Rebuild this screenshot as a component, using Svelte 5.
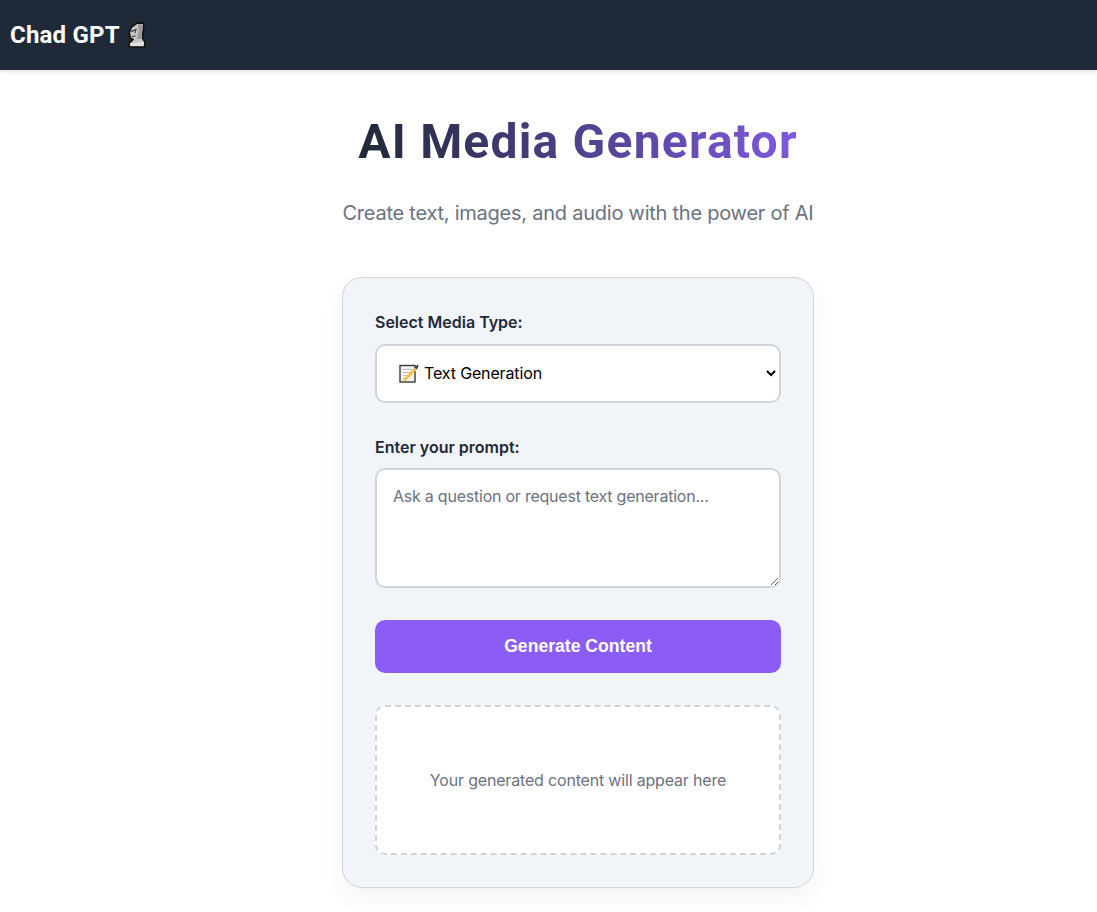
<script>
  // media types offered in the dropdown
  const MEDIA_TYPES = [
    { value: "text", label: "Text Generation" },
    { value: "image", label: "Image Generation" },
    { value: "audio", label: "Audio Generation" },
  ];

  let mediaType = $state("text");
  let prompt = $state("");
</script>

<header class="navbar">
  <span class="brand">Chad GPT</span>
  <svg class="moai" viewBox="0 0 18 26" width="18" height="26" aria-hidden="true">
    <path d="M3.5 5 L9 1 L16 1.2 L14.6 14 L15 17 L17 20 L16.5 25 L1.5 25 L1 21 L5 17.5 L2.2 16 L1.2 10 Z" fill="#c6c6c6" stroke="#111" stroke-width="1.7" stroke-linejoin="round" />
    <path d="M10 2.2 L15 2.2 L13.6 14 L13.6 17 L9 17 L10.5 9 Z" fill="#9a9a9a" />
    <path d="M2.4 21.4 L15.6 19.8 L15.6 24 L2.4 24 Z" fill="#e2e2e2" />
    <path d="M2.6 9.6 L8 7.6 L7 11 M4 14.6 L7.6 14" stroke="#444" stroke-width="1.2" fill="none" />
  </svg>
</header>

<main class="page">
  <h1 class="title">AI Media Generator</h1>
  <p class="subtitle">Create text, images, and audio with the power of AI</p>

  <section class="card">
    <label class="label" for="media-type">Select Media Type:</label>
    <div class="select-wrap">
      <svg class="memo" viewBox="0 0 20 20" width="20" height="20" aria-hidden="true">
        <rect x="1" y="2.5" width="15" height="16.5" fill="#f4f4f0" stroke="#3a3a3a" stroke-width="1.4" />
        <path d="M3.5 6.5h10M3.5 9.5h8M3.5 12.5h5M3.5 15.5h3" stroke="#bdbdbd" stroke-width="1" />
        <path d="M5 15.5 L15.8 4.6 L18 6.6 L7.2 17.4 L4.6 18 Z" fill="#f6c04a" />
        <path d="M15.8 4.6 L18.6 1.4 L19.6 2.6 L18 6.6 Z" fill="#3a3a3a" />
      </svg>
      <select id="media-type" class="field select" bind:value={mediaType}>
        {#each MEDIA_TYPES as type}
          <option value={type.value}>{type.label}</option>
        {/each}
      </select>
    </div>

    <label class="label prompt-label" for="prompt">Enter your prompt:</label>
    <textarea
      id="prompt"
      class="field textarea"
      placeholder="Ask a question or request text generation..."
      bind:value={prompt}
    ></textarea>

    <button class="generate">Generate Content</button>

    <div class="output">Your generated content will appear here</div>
  </section>
</main>

<style>
  :global(body) {
    background: #fff;
    font-family: "Inter", "Noto Sans", sans-serif;
  }

  .navbar {
    height: 70px;
    box-sizing: border-box;
    padding: 0 10px;
    display: flex;
    align-items: center;
    gap: 8px;
    background: #1f2937;
    box-shadow: 0 2px 4px rgba(0, 0, 0, 0.1);
  }

  .brand {
    color: #fff;
    font-family: "Roboto", sans-serif;
    font-size: 24px;
    font-weight: 700;
    letter-spacing: 0.2px;
  }

  .moai {
    flex: none;
  }

  .page {
    display: flex;
    flex-direction: column;
    align-items: center;
    padding-left: 59px;
    padding-bottom: 24px;
  }

  .title {
    margin: 42px 0 0;
    font-family: "Roboto", sans-serif;
    font-size: 48px;
    line-height: 60px;
    font-weight: 700;
    letter-spacing: 1.2px;
    background: linear-gradient(90deg, #1f2937, #8059e0);
    -webkit-background-clip: text;
    background-clip: text;
    color: transparent;
  }

  .subtitle {
    margin: 26px 0 0;
    font-size: 20px;
    line-height: 30px;
    letter-spacing: -0.24px;
    color: #6b7280;
  }

  .card {
    margin-top: 49px;
    width: 472px;
    box-sizing: border-box;
    padding: 32px;
    display: flex;
    flex-direction: column;
    background: #f1f4f9;
    border: 1px solid #d1d5db;
    border-radius: 20px;
    box-shadow: 0 10px 25px rgba(0, 0, 0, 0.05);
  }

  .label {
    font-size: 16px;
    line-height: 24px;
    font-weight: 600;
    color: #1f2937;
    margin-bottom: 10px;
  }

  .prompt-label {
    margin-top: 32px;
    margin-bottom: 9px;
  }

  .select-wrap {
    position: relative;
  }

  .memo {
    position: absolute;
    left: 24px;
    top: 19px;
    pointer-events: none;
  }

  .field {
    display: block;
    width: 100%;
    box-sizing: border-box;
    border: 2px solid #d1d5db;
    border-radius: 10px;
    background: #fff;
    font-family: inherit;
    font-size: 16px;
  }

  .select {
    height: 59px;
    padding: 0 0 2px 43px;
    color: #000;
    letter-spacing: -0.14px;
  }

  .textarea {
    height: 120px;
    padding: 16px;
    resize: vertical;
    letter-spacing: -0.23px;
  }

  .textarea::placeholder {
    color: #6b7280;
  }

  .generate {
    margin-top: 32px;
    height: 53px;
    border: none;
    border-radius: 10px;
    background: #8b5cf6;
    color: #fff;
    font-family: "Liberation Sans", Arial, sans-serif;
    font-size: 17.6px;
    font-weight: 700;
    cursor: pointer;
  }

  .output {
    margin-top: 32px;
    height: 150px;
    box-sizing: border-box;
    display: flex;
    align-items: center;
    justify-content: center;
    border: 2px dashed #d1d5db;
    border-radius: 10px;
    background: #fff;
    color: #6b7280;
    font-size: 16px;
    letter-spacing: -0.18px;
  }
</style>
